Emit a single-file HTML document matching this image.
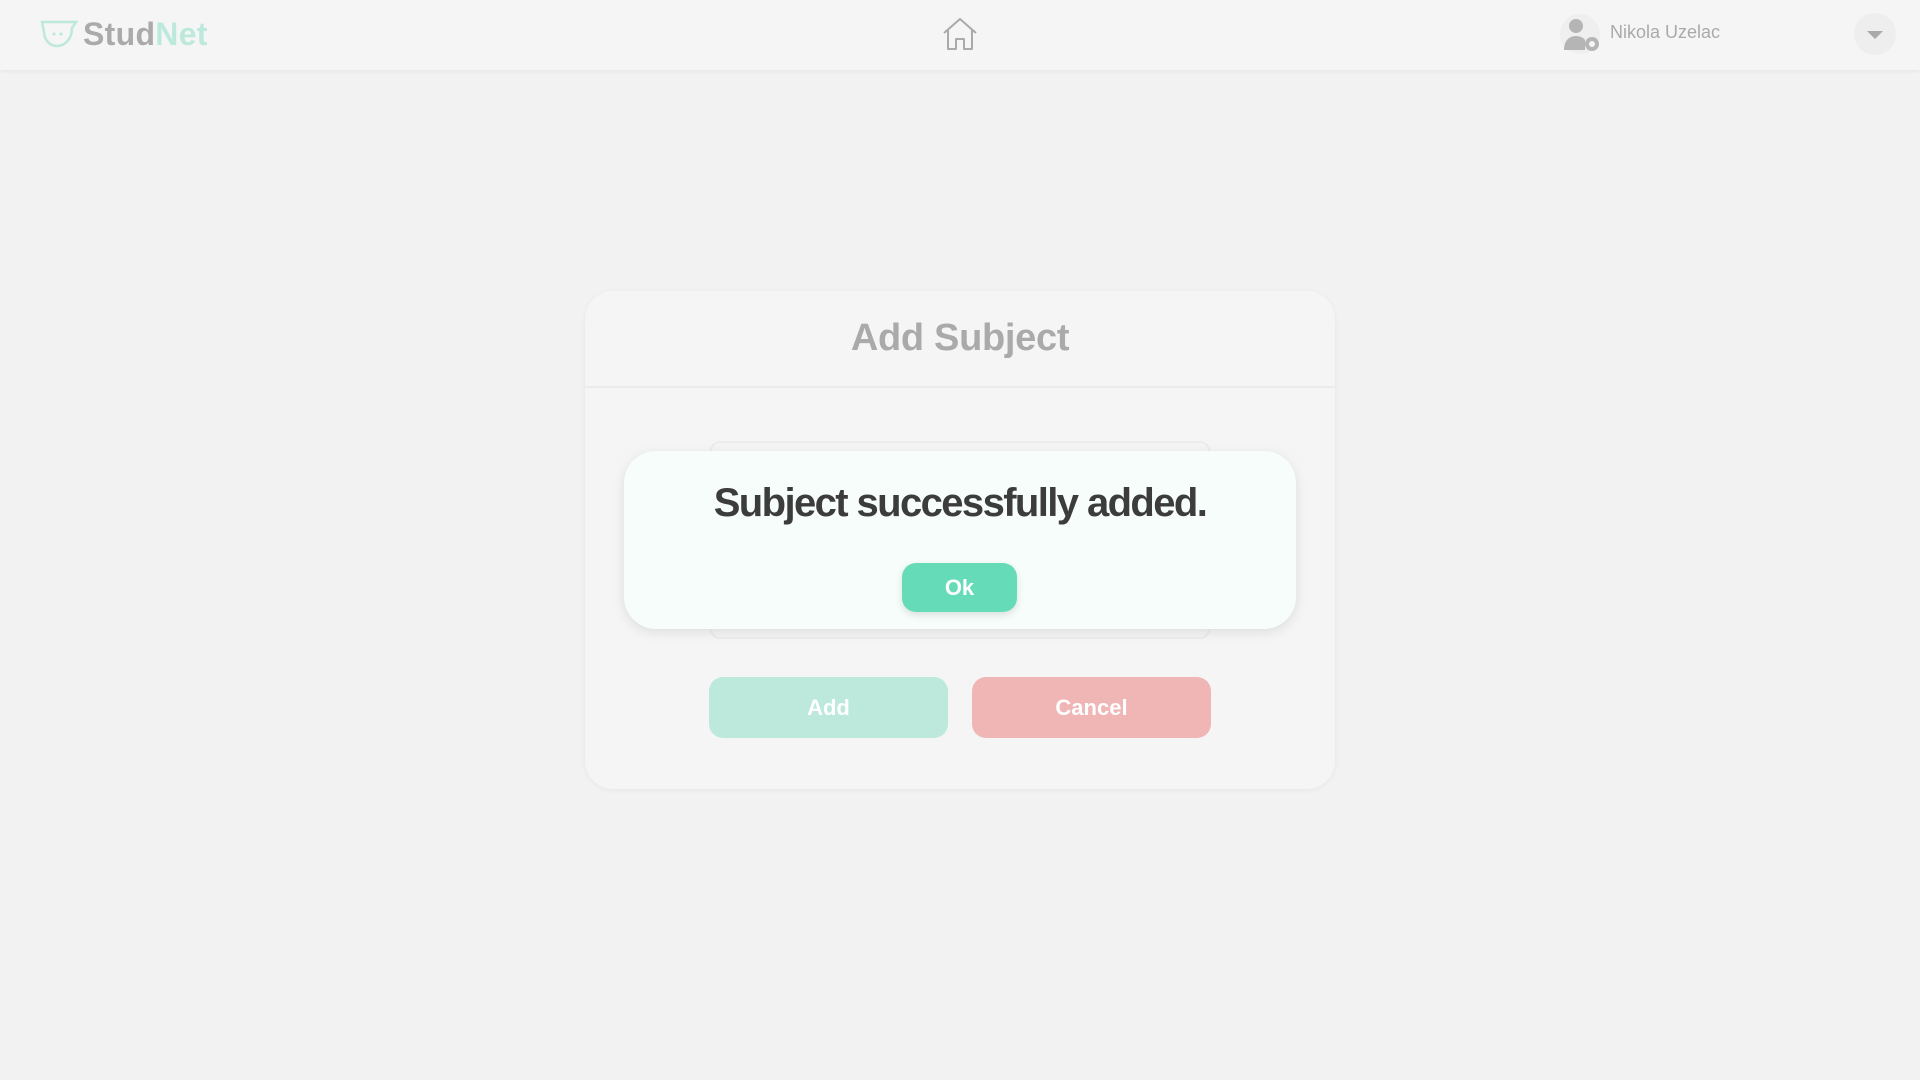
<!DOCTYPE html>
<html><head><style>
*{margin:0;padding:0;box-sizing:border-box}
body{width:1920px;height:1080px;background:#f1f2f1;font-family:"Liberation Sans",sans-serif;position:relative;overflow:hidden}
.hdr{position:absolute;left:0;top:0;width:1920px;height:70px;background:#f5f5f5;box-shadow:0 1px 4px rgba(0,0,0,.06)}
.abs{position:absolute}
.card{left:585px;top:291px;width:750px;height:498px;background:#f5f5f5;border-radius:28px;box-shadow:0 1px 6px rgba(0,0,0,.05)}
.btn{position:absolute;border-radius:14px;color:#fff;font-weight:bold;font-size:22px;display:flex;align-items:center;justify-content:center}
</style></head><body>
<div class="hdr">
 <svg class="abs" style="left:40px;top:20px" width="38" height="28" viewBox="0 0 38 28">
  <path d="M2 2 H30 L36 2 L32 8 C32 20 24 26 17 26 C9 26 4 19 4 12 Z" fill="none" stroke="#bde9dc" stroke-width="2.5"/>
  <circle cx="14" cy="14" r="1.6" fill="#bde9dc"/><circle cx="21" cy="14" r="1.6" fill="#bde9dc"/>
 </svg>
 <div class="abs" style="left:83px;top:16px;font-size:32px;font-weight:bold;letter-spacing:0.3px"><span style="color:#aaa">Stud</span><span style="color:#bde9dc">Net</span></div>
 <svg class="abs" style="left:941px;top:16px" width="38" height="36" viewBox="0 0 38 36">
  <path d="M3 17 L19 3 L35 17 M7 14 V33 H15 V23 H23 V33 H31 V14" fill="none" stroke="#aaa" stroke-width="2" stroke-linejoin="round"/>
 </svg>
 <svg class="abs" style="left:1560px;top:14px" width="42" height="40" viewBox="0 0 42 40">
  <circle cx="20" cy="20" r="20" fill="#efefef"/>
  <circle cx="16" cy="12" r="7" fill="#b5b5b5"/>
  <path d="M4 36 C4 26 10 22 16 22 C20 22 24 24 25 26 V36 Z" fill="#b5b5b5"/>
  <circle cx="32" cy="30" r="7" fill="#b5b5b5"/><circle cx="32" cy="30" r="3" fill="#f5f5f5"/>
 </svg>
 <div class="abs" style="left:1610px;top:22px;font-size:18px;color:#aaa">Nikola Uzelac</div>
 <div class="abs" style="left:1854px;top:13px;width:42px;height:42px;border-radius:50%;background:#eeeeee"></div>
 <div class="abs" style="left:1867px;top:31px;width:0;height:0;border-left:8px solid transparent;border-right:8px solid transparent;border-top:8px solid #aaa"></div>
</div>
<div class="abs card">
 <div class="abs" style="left:0;top:0;width:750px;height:97px;border-bottom:2px solid #ebebeb;display:flex;align-items:center;justify-content:center;font-size:38px;font-weight:bold;color:#aaa;letter-spacing:-0.3px">Add Subject</div>
</div>
<div class="abs" style="left:710px;top:441px;width:500px;height:198px;border:2px solid #ececec;border-radius:10px"></div>
<div class="btn" style="left:709px;top:677px;width:239px;height:61px;background:#bde9dc">Add</div>
<div class="btn" style="left:972px;top:677px;width:239px;height:61px;background:#f0b6b6">Cancel</div>
<div class="abs" style="left:624px;top:451px;width:672px;height:178px;background:#f7fdfb;border-radius:32px;box-shadow:0 3px 12px rgba(0,0,0,.1)">
 <div class="abs" style="left:0;top:30px;width:672px;text-align:center;font-size:40px;font-weight:bold;color:#3c3c3c;letter-spacing:-1.6px">Subject successfully added.</div>
 <div class="btn" style="left:278px;top:112px;width:115px;height:49px;background:#66dbb7;box-shadow:0 3px 8px rgba(0,0,0,.12)">Ok</div>
</div>
</body></html>
